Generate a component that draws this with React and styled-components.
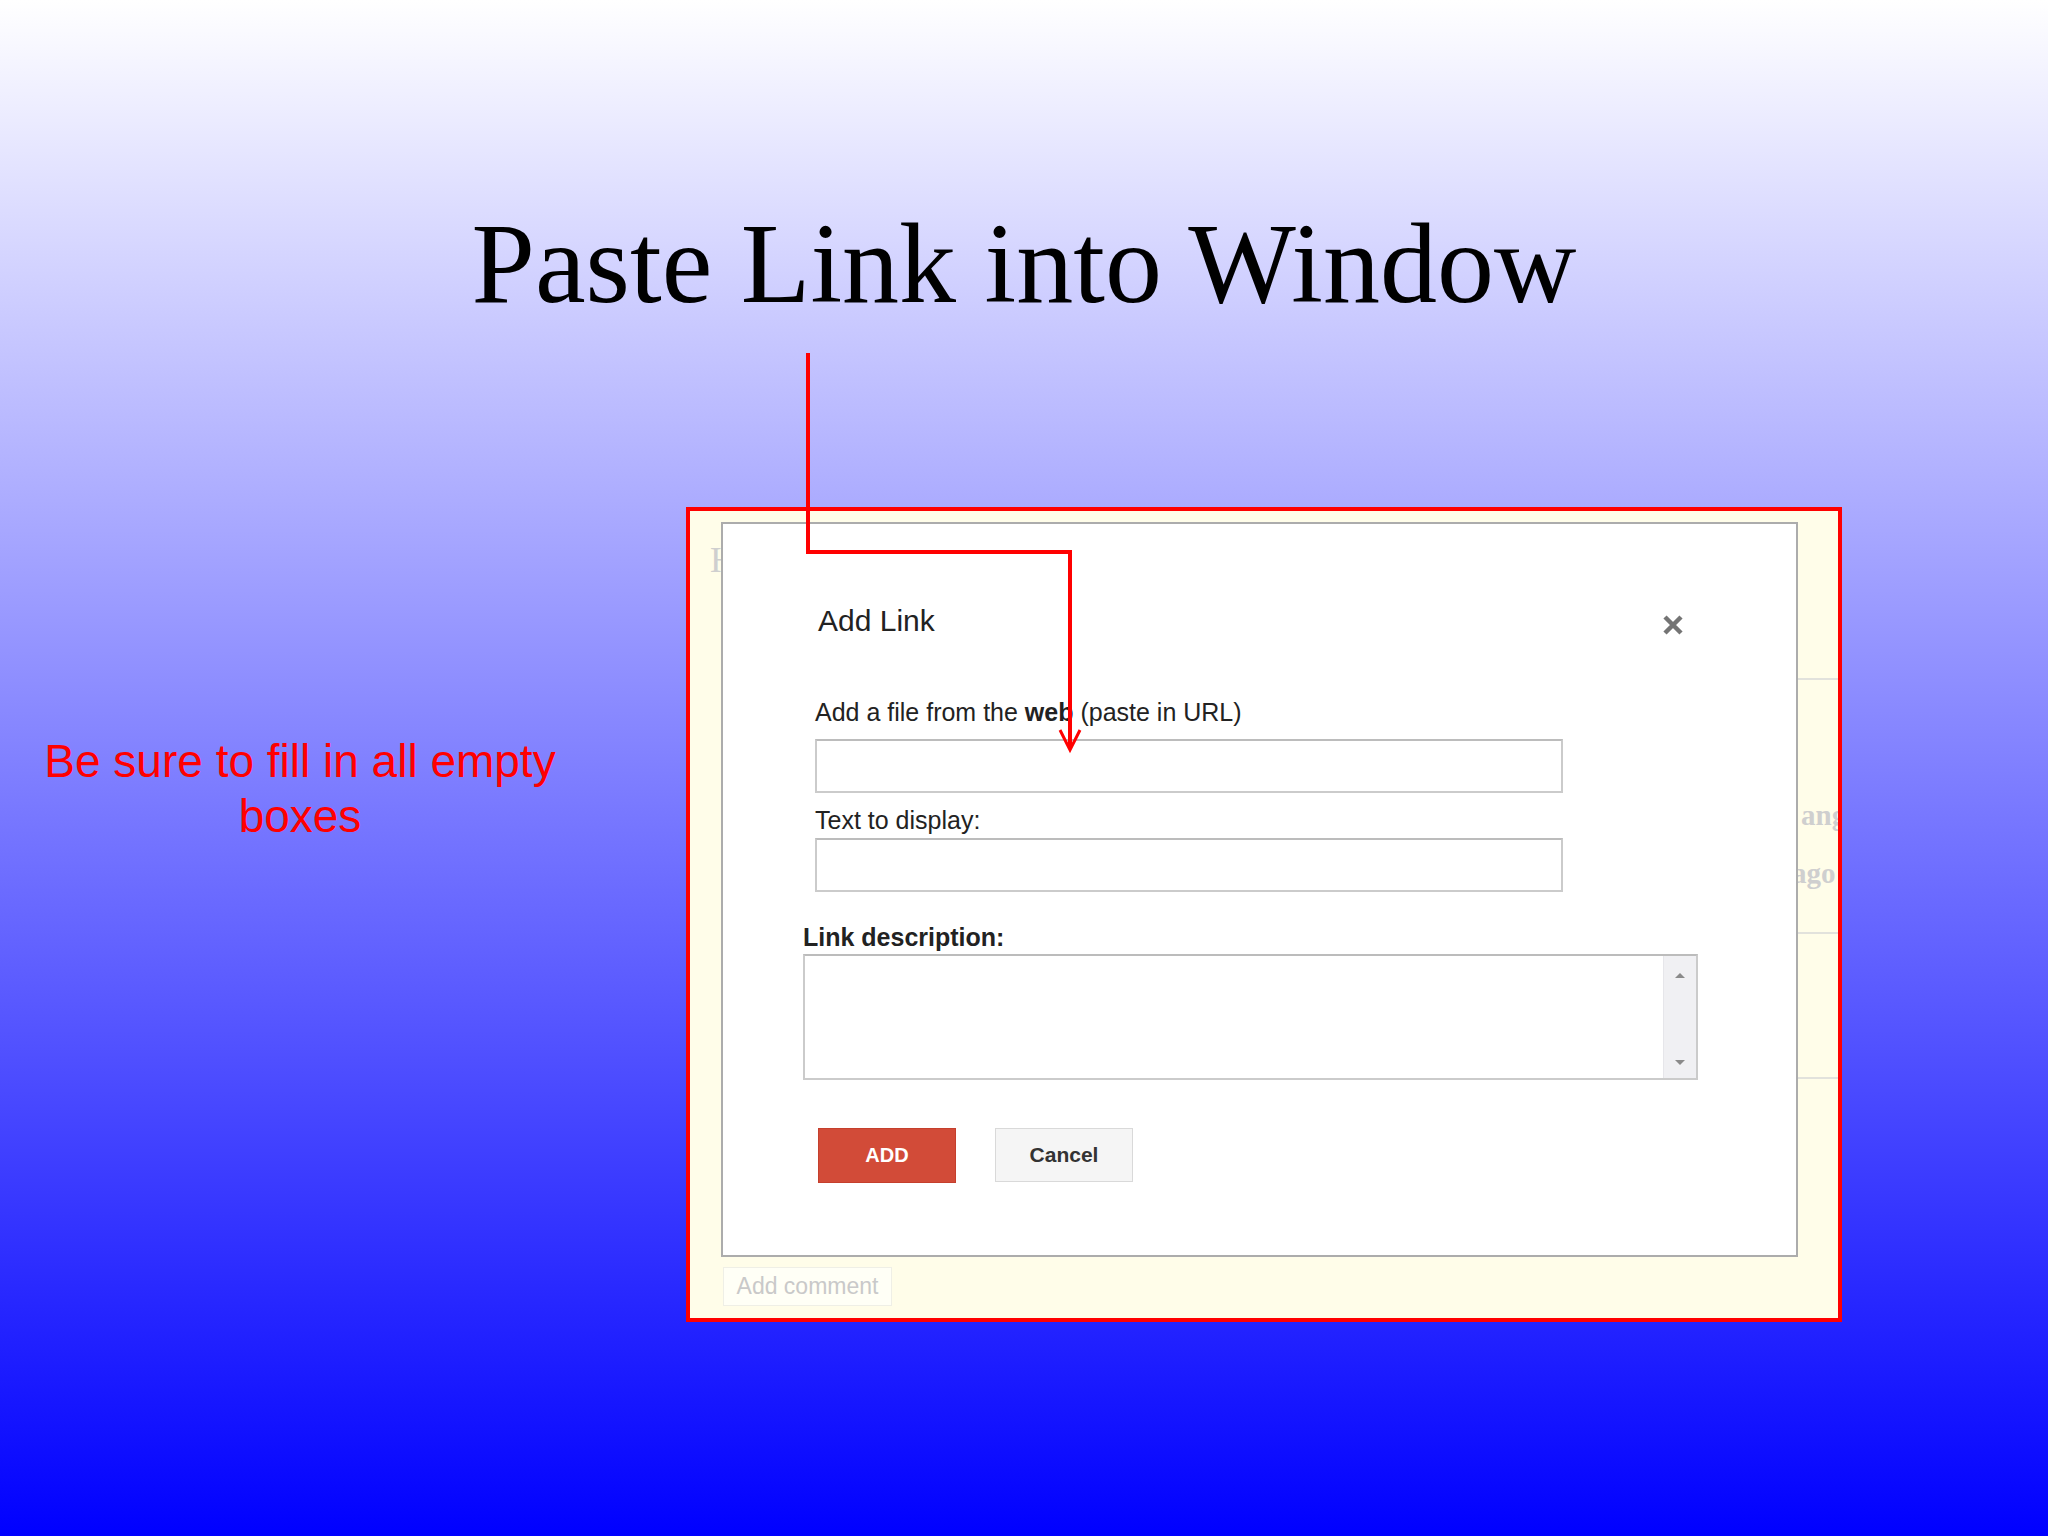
import React from 'react'
import styled, { createGlobalStyle } from 'styled-components'

const GlobalStyle = createGlobalStyle`
  html, body {
    margin: 0;
    padding: 0;
  }
  body {
    font-family: "Liberation Sans", Arial, sans-serif;
  }
`

const Slide = styled.div`
  position: relative;
  width: 2048px;
  height: 1536px;
  overflow: hidden;
  background: linear-gradient(to bottom, #ffffff 0%, #0000ff 100%);
`

const Title = styled.h1`
  margin: 0;
  padding-top: 207px;
  text-align: center;
  font-family: "Liberation Serif", "Times New Roman", serif;
  font-weight: normal;
  font-size: 114px;
  line-height: 113px;
  color: #000;
`

const Content = styled.div`
  display: flex;
  align-items: flex-start;
  margin-top: 187px;
`

const Note = styled.p`
  margin: 0;
  width: 600px;
  padding-top: 227px;
  text-align: center;
  font-size: 46px;
  line-height: 55px;
  color: #ff0000;
`

const Frame = styled.div`
  box-sizing: border-box;
  display: flex;
  margin-left: 86px;
  width: 1156px;
  height: 815px;
  border: 4px solid #ff0000;
  background: #fffde9;
  overflow: hidden;
`

const SideStrip = styled.div`
  display: flex;
  flex-direction: column;
  width: ${p => p.$width}px;
  flex: none;
  overflow: hidden;
`

const GhostText = styled.span`
  display: block;
  margin-top: ${p => p.$top}px;
  margin-left: ${p => p.$left || 0}px;
  white-space: nowrap;
  font-family: "Liberation Serif", Georgia, serif;
  font-weight: ${p => (p.$bold ? 'bold' : 'normal')};
  font-size: ${p => p.$size}px;
  line-height: ${p => p.$size}px;
  color: #cfcfcf;
`

const GhostRule = styled.div`
  margin-top: ${p => p.$top}px;
  height: 2px;
  background: #e2e2dc;
`

const DialogColumn = styled.div`
  display: flex;
  flex-direction: column;
  padding-top: 11px;
  flex: none;
`

const Dialog = styled.div`
  box-sizing: border-box;
  width: 1077px;
  height: 735px;
  padding: 79px 0 0 80px;
  border: 2px solid #acacac;
  background: #fff;
  display: flex;
  flex-direction: column;
  align-items: flex-start;
`

const Header = styled.div`
  display: flex;
  align-items: flex-start;
  justify-content: space-between;
  width: 865px;
  margin-left: 15px;
`

const DialogTitle = styled.h2`
  margin: 0;
  font-weight: normal;
  font-size: 30px;
  line-height: 36px;
  color: #222;
`

const CloseButton = styled.button`
  width: 20px;
  height: 20px;
  margin-top: 12px;
  padding: 0;
  border: 0;
  background: none;
  display: flex;
`

const Label = styled.label`
  display: block;
  margin-top: ${p => p.$top}px;
  margin-left: ${p => (p.$bold ? 0 : 12)}px;
  font-size: 25px;
  line-height: 30px;
  font-weight: ${p => (p.$bold ? 'bold' : 'normal')};
  color: #222;
`

const TextField = styled.div`
  box-sizing: border-box;
  margin-top: ${p => p.$top}px;
  margin-left: 12px;
  width: 748px;
  height: 54px;
  border: 2px solid #cbcbcb;
  border-top-color: #bcbcbc;
  background: #fff;
`

const TextArea = styled.div`
  box-sizing: border-box;
  display: flex;
  margin-top: 2px;
  width: 895px;
  height: 126px;
  border: 2px solid #cbcbcb;
  border-top-color: #bcbcbc;
  background: #fff;
`

const TextAreaBody = styled.div`
  flex: 1;
`

const Scrollbar = styled.div`
  width: 32px;
  display: flex;
  flex-direction: column;
  align-items: center;
  justify-content: space-between;
  padding: 17px 0 13px;
  border-left: 1px solid #e6e6ea;
  background: #f0f0f3;
`

const ScrollArrow = styled.div`
  width: 0;
  height: 0;
  border-left: 5px solid transparent;
  border-right: 5px solid transparent;
  ${p => (p.$down ? 'border-top: 5px solid #8a8a8a;' : 'border-bottom: 5px solid #8a8a8a;')}
`

const Buttons = styled.div`
  display: flex;
  align-items: flex-start;
  gap: 39px;
  margin-top: 48px;
  margin-left: 15px;
`

const Button = styled.button`
  box-sizing: border-box;
  width: 138px;
  height: ${p => (p.$primary ? 55 : 54)}px;
  padding: 0;
  font-family: "Liberation Sans", Arial, sans-serif;
  font-weight: bold;
  font-size: ${p => (p.$primary ? 20 : 21)}px;
  color: ${p => (p.$primary ? '#fff' : '#333')};
  background: ${p => (p.$primary ? '#d24b38' : '#f5f5f5')};
  border: 1px solid ${p => (p.$primary ? '#c53f2d' : '#d9d9d9')};
`

const CommentButton = styled.div`
  box-sizing: border-box;
  width: 169px;
  height: 39px;
  margin-top: 10px;
  margin-left: 2px;
  border: 1px solid #efefe6;
  background: #fffff6;
  text-align: center;
  font-size: 23px;
  line-height: 37px;
  color: #c9c9c9;
`

const Pointer = styled.svg`
  position: absolute;
  left: 0;
  top: 0;
  pointer-events: none;
`

const CloseIcon = () => (
  <svg width="20" height="20" viewBox="0 0 20 20">
    <path d="M2 2 L18 18 M18 2 L2 18" stroke="#747474" strokeWidth="4.5" strokeLinecap="butt" />
  </svg>
)

const App = () => {
  return (
    <Slide>
      <GlobalStyle />
      <Title>Paste Link into Window</Title>
      <Content>
        <Note>
          Be sure to fill in all empty<br />boxes
        </Note>
        <Frame>
          <SideStrip $width={31}>
            <GhostText $top={31} $left={20} $size={36}>H</GhostText>
          </SideStrip>
          <DialogColumn>
            <Dialog>
              <Header>
                <DialogTitle>Add Link</DialogTitle>
                <CloseButton aria-label="Close">
                  <CloseIcon />
                </CloseButton>
              </Header>
              <Label $top={58}>
                Add a file from the <b>web</b> (paste in URL)
              </Label>
              <TextField $top={12} />
              <Label $top={12}>Text to display:</Label>
              <TextField $top={3} />
              <Label $top={30} $bold>Link description:</Label>
              <TextArea>
                <TextAreaBody />
                <Scrollbar>
                  <ScrollArrow />
                  <ScrollArrow $down />
                </Scrollbar>
              </TextArea>
              <Buttons>
                <Button $primary>ADD</Button>
                <Button>Cancel</Button>
              </Buttons>
            </Dialog>
            <CommentButton>Add comment</CommentButton>
          </DialogColumn>
          <SideStrip $width={40}>
            <GhostRule $top={167} />
            <GhostText $top={121} $left={3} $size={29} $bold>ang</GhostText>
            <GhostText $top={29} $left={-6} $size={29} $bold>ago</GhostText>
            <GhostRule $top={44} />
            <GhostRule $top={143} />
          </SideStrip>
        </Frame>
      </Content>
      <Pointer width="2048" height="1536" viewBox="0 0 2048 1536">
        <path d="M808 353 V552 H1070 V748" fill="none" stroke="#ff0000" strokeWidth="4" />
        <path d="M1060 730 L1070 750 L1080 730" fill="none" stroke="#ff0000" strokeWidth="3" />
      </Pointer>
    </Slide>
  )
}

export default App
